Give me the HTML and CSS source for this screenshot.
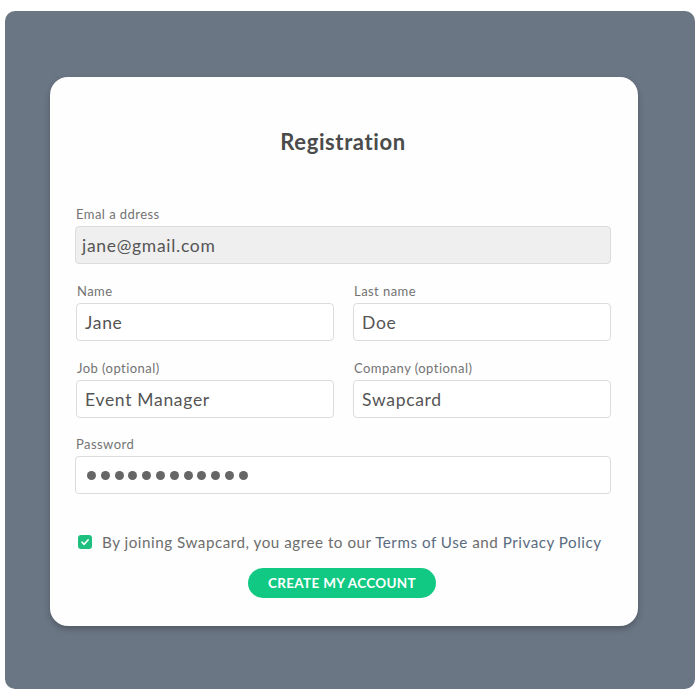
FILE: index.html
```html
<!DOCTYPE html>
<html>
<head>
<meta charset="utf-8">
<link rel="stylesheet" href="styles.css">
</head>
<body>
<div class="backdrop">
  <div class="card">
    <h1 class="title">Registration</h1>
    <div class="form">
      <div class="group">
        <div class="label">Emal a ddress</div>
        <div class="field disabled">jane@gmail.com</div>
      </div>
      <div class="row">
        <div class="group">
          <div class="label">Name</div>
          <div class="field">Jane</div>
        </div>
        <div class="group">
          <div class="label">Last name</div>
          <div class="field">Doe</div>
        </div>
      </div>
      <div class="row">
        <div class="group">
          <div class="label">Job (optional)</div>
          <div class="field">Event Manager</div>
        </div>
        <div class="group">
          <div class="label">Company (optional)</div>
          <div class="field">Swapcard</div>
        </div>
      </div>
      <div class="group group-last">
        <div class="label">Password</div>
        <div class="field password">
          <span class="dot"></span><span class="dot"></span><span class="dot"></span><span class="dot"></span><span class="dot"></span><span class="dot"></span><span class="dot"></span><span class="dot"></span><span class="dot"></span><span class="dot"></span><span class="dot"></span><span class="dot"></span>
        </div>
      </div>
    </div>
    <div class="agree">
      <span class="check">
        <svg width="10" height="10" viewBox="0 0 10 10"><path d="M2 5.2 L4.2 7.3 L8.2 2.8" fill="none" stroke="#fff" stroke-width="1.6" stroke-linecap="round" stroke-linejoin="round"/></svg>
      </span>
      <span class="agree-text">By joining Swapcard, you agree to our <a class="link">Terms of Use</a> and <a class="link">Privacy Policy</a></span>
    </div>
    <div class="actions">
      <button class="btn">CREATE MY ACCOUNT</button>
    </div>
  </div>
</div>
</body>
</html>
```
FILE: styles.css
```css
* { box-sizing: border-box; }
html, body { margin: 0; padding: 0; background: #ffffff; }
body { font-family: Lato, "Noto Sans", sans-serif; }

.backdrop {
  margin: 11px 5px 0 5px;
  width: 690px;
  height: 678px;
  background: #6b7685;
  border-radius: 10px;
  padding: 66px 0 0 45px;
}

.card {
  width: 588px;
  height: 549px;
  background: #fefefe;
  border-radius: 18px;
  box-shadow: 0 3px 6px rgba(0,0,0,0.25);
  padding: 50px 27px 0 25px;
}

.title {
  margin: 0;
  text-align: center;
  font-size: 22px;
  line-height: 30px;
  font-weight: 700;
  color: #4b4b4b;
  letter-spacing: 0.6px;
}

.form {
  margin-top: 49px;
  display: flex;
  flex-direction: column;
  gap: 19px;
}

.group-last { margin-top: -1px; }

.row {
  display: grid;
  grid-template-columns: 1fr 1fr;
  column-gap: 19px;
  padding-left: 1px;
}

.group { display: flex; flex-direction: column; }

.label {
  font-size: 13px;
  line-height: 16px;
  color: #737373;
  margin-bottom: 4px;
  padding-left: 1px;
  letter-spacing: 0.45px;
}

.field {
  height: 38px;
  border: 1px solid #dcdcdc;
  border-radius: 4px;
  background: #fff;
  padding: 0 8px;
  display: flex;
  align-items: center;
  font-size: 17.5px;
  letter-spacing: 0.7px;
  color: #555;
}

.field.disabled {
  background: #efefef;
  padding-left: 6px;
}

.field.password {
  gap: 4.8px;
  padding-left: 11px;
}

.dot {
  width: 9px;
  height: 9px;
  border-radius: 50%;
  background: #666;
}

.agree {
  margin-top: 39px;
  display: flex;
  align-items: center;
  gap: 10px;
  padding-left: 3px;
}

.check {
  width: 14px;
  height: 14px;
  border-radius: 3px;
  background: #1fc07f;
  display: flex;
  align-items: center;
  justify-content: center;
}

.agree-text {
  font-size: 15.2px;
  color: #6d6d6d;
  letter-spacing: 0.52px;
}

.link { color: #5a6c80; text-decoration: none; }

.actions {
  margin-top: 17px;
  display: flex;
  justify-content: center;
  padding-right: 2px;
}

.btn {
  height: 30px;
  width: 188px;
  border: none;
  border-radius: 15px;
  background: #12c983;
  color: #fff;
  font-family: Lato, "Noto Sans", sans-serif;
  font-weight: 700;
  font-size: 13.5px;
  letter-spacing: 0.3px;
}
```
